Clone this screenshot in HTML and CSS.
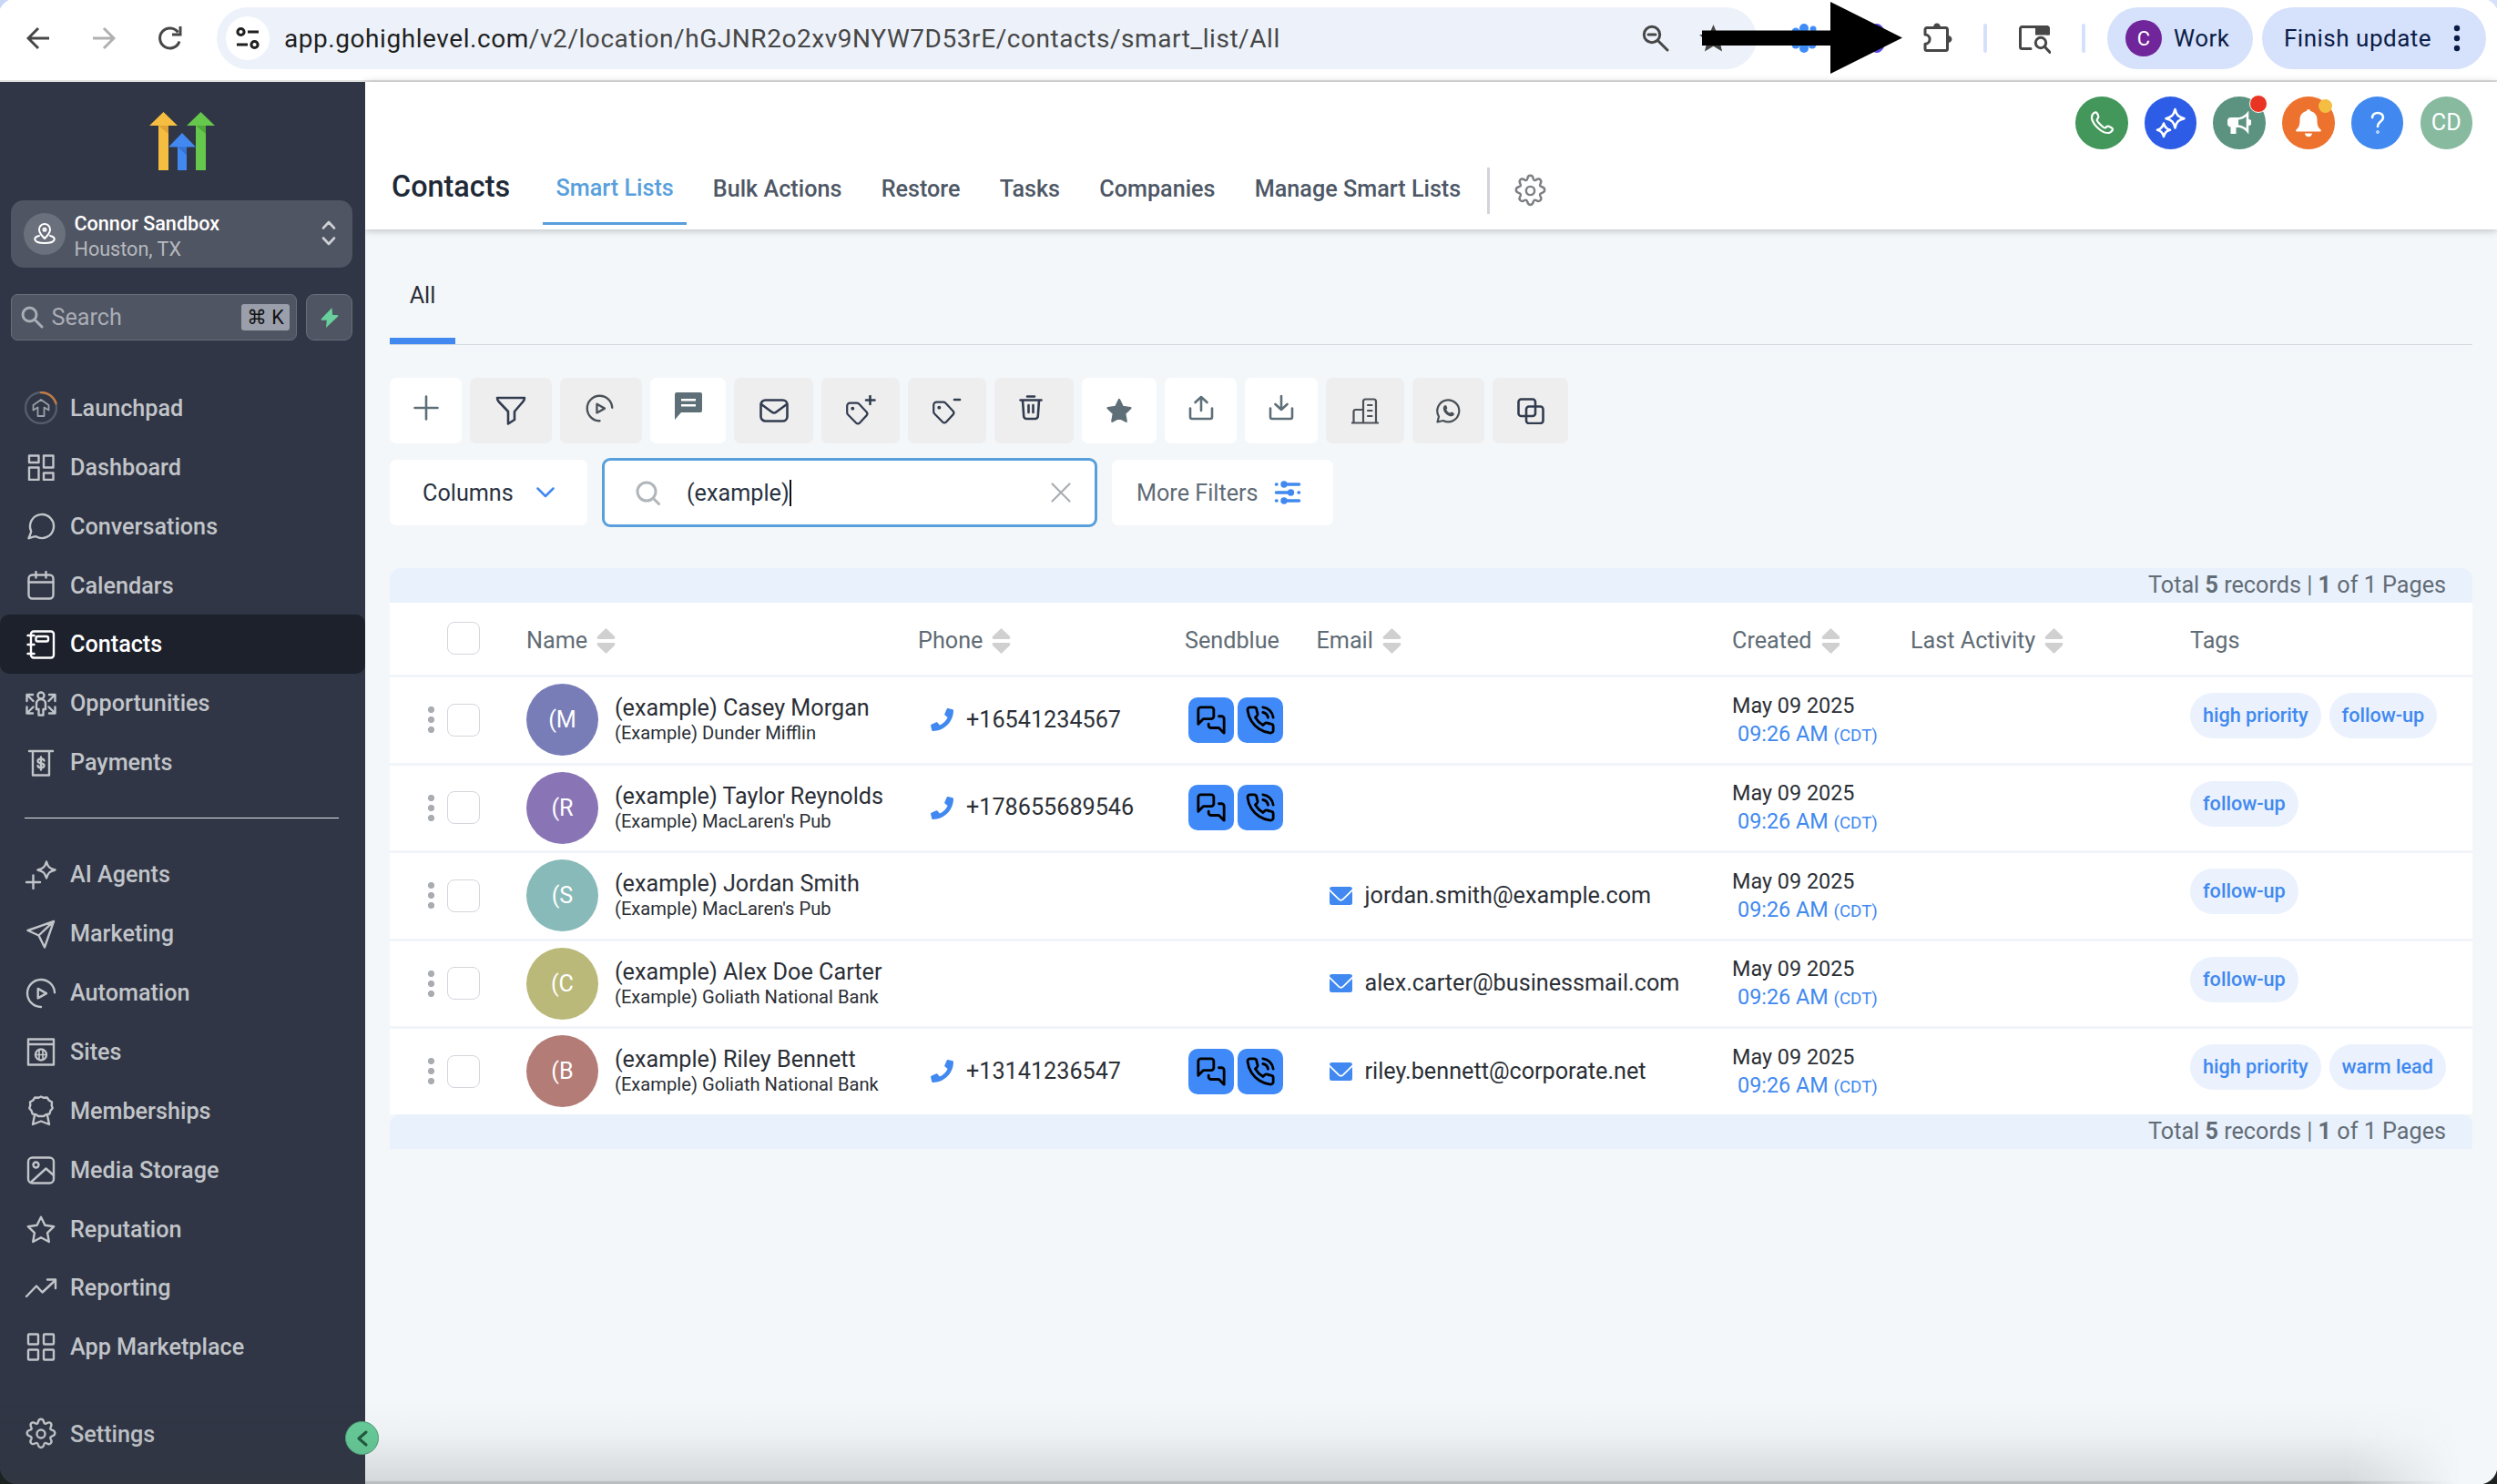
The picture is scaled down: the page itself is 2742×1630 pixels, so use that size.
FILE: index.html
```html
<!DOCTYPE html>
<html lang="en">
<head>
<meta charset="utf-8">
<title>Contacts</title>
<link rel="stylesheet" href="styles.css">
</head>
<body>
<svg class="defs" width="0" height="0" aria-hidden="true">
  <symbol id="gear" viewBox="0 0 24 24"><circle cx="12" cy="12" r="3"/><path d="M12 1.2c1.500 0 1.900 1 2.100 2.200.2 1 1 1.400 1.900.9 1.100-.7 2.100-1.200 3.100-.2s.6 2 0 3.100c-.6.900-.1 1.700.8 1.900 1.300.3 2.300.8 2.300 2.300 0 1.700-1 2-2.300 2.300-.9.300-1.400 1.100-.8 2.100.7 1.100 1.100 2 .1 3-1 1.100-2.100.7-3.100 0-.9-.5-1.700-.1-1.900.9-.3 1.200-.7 2.300-2.200 2.300s-1.900-1.100-2.200-2.300c-.2-1-1-1.400-1.900-.9-1.100.7-2.100 1.100-3.100 0-1-1-.6-2 .1-3 .5-1 .1-1.800-.8-2.100-1.300-.3-2.300-.6-2.300-2.300 0-1.500 1-2 2.300-2.300.9-.2 1.400-1 .8-1.900-.6-1.100-1-2.100 0-3.100s2-.5 3.100.2c.9.500 1.700.1 1.900-.9.200-1.200.6-2.200 2.100-2.200z"/></symbol>
  <symbol id="play" viewBox="0 0 24 24"><path d="M22 11.500A10 10 0 1 0 12 22"/><path d="M9.800 8.600v7l6.200-3.500z"/></symbol>
  <symbol id="tag" viewBox="0 0 28 28"><path d="M2 8a3 3 0 0 1 3-3h6.500a3 3 0 0 1 2.200.9l7.600 8.200a2.500 2.500 0 0 1 0 3.400l-6.800 7.300a2.500 2.500 0 0 1-3.600 0L2.900 16.700A3 3 0 0 1 2 14.600z"/><circle cx="7.500" cy="10.500" r=".8"/></symbol>
  <symbol id="sort" viewBox="0 0 20 28"><path d="M10 0l9.400 9c1 1.200.4 3-1.200 3H1.800C.2 12-.4 10.200.6 9zM10 28l9.400-9c1-1.200.4-3-1.200-3H1.800C.2 16-.4 17.800.6 19z"/></symbol>
  <symbol id="phone" viewBox="0 0 512 512"><path d="M493 24.600l-104-24c-11.300-2.600-22.900 3.300-27.500 13.900l-48 112c-4.200 9.800-1.400 21.300 6.900 28l60.600 49.600c-36 76.700-98.900 140.500-177.200 177.200l-49.600-60.600c-6.800-8.300-18.200-11.100-28-6.900l-112 48C3.900 366.500-2 378.100.6 389.400l24 104C27.100 504.200 36.700 512 48 512c256.100 0 464-207.500 464-464 0-11.200-7.700-20.900-19-23.400z"/></symbol>
  <symbol id="mail" viewBox="0 0 25 20"><path d="M2.500 0h20A2.500 2.500 0 0 1 25 2.500L14.300 13a2.600 2.600 0 0 1-3.600 0L0 2.500A2.500 2.500 0 0 1 2.500 0zM0 5l9.500 9.300a4.300 4.300 0 0 0 6 0L25 5v12.500a2.500 2.500 0 0 1-2.500 2.500h-20A2.500 2.500 0 0 1 0 17.500z"/></symbol>
  <symbol id="chats" viewBox="0 0 24 24"><path d="M14 9a2 2 0 0 1-2 2H6l-4 4V4a2 2 0 0 1 2-2h8a2 2 0 0 1 2 2z"/><path d="M18 9h2a2 2 0 0 1 2 2v11l-4-4h-6a2 2 0 0 1-2-2v-1"/></symbol>
  <symbol id="call" viewBox="0 0 24 24"><path d="M22 16.920v3a2 2 0 0 1-2.180 2 19.790 19.790 0 0 1-8.630-3.070 19.500 19.500 0 0 1-6-6 19.790 19.790 0 0 1-3.070-8.670A2 2 0 0 1 4.110 2h3a2 2 0 0 1 2 1.720c.13.960.36 1.900.7 2.810a2 2 0 0 1-.45 2.110L8.090 9.910a16 16 0 0 0 6 6l1.270-1.270a2 2 0 0 1 2.110-.45c.91.340 1.850.57 2.810.7A2 2 0 0 1 22 16.920z"/><path d="M14 2a9 9 0 0 1 8 8M14 6a5 5 0 0 1 4 4"/></symbol>
</svg>

<header class="browser">
  <div class="nav-buttons">
    <svg width="26" height="26" viewBox="0 0 26 26" class="ln dark"><path d="M25 13H2M13 2L2 13l11 11"/></svg>
    <svg width="26" height="26" viewBox="0 0 26 26" class="ln faded"><path d="M1 13h23M13 2l11 11-11 11"/></svg>
    <svg width="28" height="28" viewBox="0 0 28 28" class="ln dark"><path d="M24 17.500A11 11 0 1 1 22.500 7.500"/><path d="M25 1v9h-9" /></svg>
  </div>
  <div class="omnibox">
    <span class="site-info"><svg width="26" height="26" viewBox="0 0 26 26" class="ln site"><circle cx="5.500" cy="6" r="3.600"/><path d="M13 6h12M1 20h12"/><circle cx="20.500" cy="20" r="3.600"/></svg></span>
    <span class="url"><b>app.gohighlevel.com</b>/v2/location/hGJNR2o2xv9NYW7D53rE/contacts/smart_list/All</span>
    <svg class="ln dark zoom-ic" width="30" height="30" viewBox="0 0 30 30"><circle cx="11" cy="11" r="8.700"/><path d="M17.500 17.500L28 28M7 11h8"/></svg>
    <svg class="star" width="37" height="37" viewBox="0 0 24 24"><path d="M12 17.300l6.200 3.700-1.600-7L22 9.200l-7.200-.6L12 2 9.200 8.600 2 9.200 7.500 14l-1.700 7z"/></svg>
  </div>
  <div class="ext">
    <svg width="32" height="32" viewBox="0 0 32 32" fill="#3f8cf7"><circle cx="16" cy="16" r="10"/><circle cx="16" cy="5" r="5"/><circle cx="16" cy="27" r="5"/><circle cx="7" cy="9" r="4.500"/><circle cx="26" cy="6" r="3.500"/><circle cx="7" cy="23" r="4.500"/><circle cx="25" cy="23" r="4.500"/><circle cx="27" cy="16" r="4"/><circle cx="5" cy="16" r="4"/></svg>
    <svg width="32" height="32" viewBox="0 0 32 32"><ellipse cx="16" cy="16" rx="10" ry="16" fill="#5b4be6"/></svg>
    <svg width="34" height="34" viewBox="0 0 34 34"><path class="ln dark" d="M5 5.500h20.500a2 2 0 0 1 2 2v21a2 2 0 0 1-2 2H5a2 2 0 0 1-2-2V23.200a5 5 0 0 0 0-10.200V7.500a2 2 0 0 1 2-2z"/><path fill="#474747" d="M12 5a4 4.500 0 0 1 8 0zM28 14a4.500 4 0 0 1 0 8z"/></svg>
  </div>
  <i class="vline"></i>
  <svg class="tabsearch" width="36" height="32" viewBox="0 0 36 32"><path class="ln dark" d="M14 26.500H4.500a2 2 0 0 1-2-2v-20a2 2 0 0 1 2-2h28V10"/><path fill="#474747" d="M19 2h15a2 2 0 0 1 1 2v7.500H19z"/><circle class="ln dark" cx="25" cy="20" r="5.700"/><path class="ln dark" d="M29 24l6 6.500"/></svg>
  <i class="vline"></i>
  <div class="pill work"><span class="c-avatar">C</span>Work</div>
  <div class="pill finish">Finish update<svg width="8" height="30" viewBox="0 0 8 30" fill="#0b1d47"><circle cx="4" cy="4" r="3.200"/><circle cx="4" cy="15" r="3.200"/><circle cx="4" cy="26" r="3.200"/></svg></div>
  <svg class="pointer" width="222" height="82" viewBox="0 0 222 82"><path d="M0 33.500h141V2l79 39.500L141 81V50H0z"/></svg>
</header>

<div class="app">
  <aside class="sidebar">
    <svg class="logo" width="72" height="64" viewBox="0 0 72 64">
      <path fill="#f6be40" d="M15.500 0L31 15H21v49H10V15H0z"/><path fill="#dfa233" d="M10 15h11v9z"/>
      <path fill="#66c74d" d="M56.500 0L72 15H62v49H51V15H41z"/><path fill="#4fa83a" d="M51 15h11v9z"/>
      <path fill="#4189f0" d="M36 23l15 15.500H41V64H31V38.500H21z"/><path fill="#3472d4" d="M31 38.500h10v9z"/>
    </svg>
    <div class="location">
      <span class="loc-icon"><svg class="ln" width="24" height="24" viewBox="0 0 24 24"><path d="M12 17S6 11.500 6 7a6 6 0 0 1 12 0c0 4.500-6 10-6 10z"/><circle cx="12" cy="7.200" r="1.500"/><path d="M6 14c-3 .8-5 2-4.700 4 .4 2.500 5 4 10.700 4s10.300-1.500 10.700-4c.3-2-1.700-3.200-4.700-4"/></svg></span>
      <div class="loc-text"><strong>Connor Sandbox</strong><span>Houston, TX</span></div>
      <svg class="ln updown" width="16" height="28" viewBox="0 0 16 28"><path d="M2 8.500l6-6.500 6 6.500M2 19.500l6 6.500 6-6.500"/></svg>
    </div>
    <div class="search-row">
      <div class="search"><svg class="ln" width="25" height="25" viewBox="0 0 25 25"><circle cx="9.500" cy="9.500" r="7.500"/><path d="M15 15l8 8"/></svg><span>Search</span><kbd>⌘ K</kbd></div>
      <div class="bolt"><svg width="20" height="22" viewBox="0 0 20 22"><path fill="#69cf9c" d="M12.500 0L1 12c-.8.900-.2 1.800.8 1.800h5L6 22 19 9.800c.8-.9.200-1.800-.8-1.800h-5z"/></svg></div>
    </div>
    <nav class="menu">
      <a><svg width="36" height="36" viewBox="0 0 36 36"><circle cx="18" cy="18" r="17" stroke="#555c6a"/><path stroke="#c07c45" d="M18 1a17 17 0 0 1 16.500 12"/><path stroke="#9a9fa8" stroke-width="1.800" d="M18 9l8.500 6v5.500l-5-3V27H14.500v-9.500l-5 3V15z"/></svg>Launchpad</a>
      <a><svg width="29" height="29" viewBox="0 0 29 29"><path d="M1.500 1.500h10.500v7.500H1.500zM17.500 1.500H28v13H17.500zM1.500 14.500h10.500V28H1.500zM17.500 20.500H28V28H17.500z"/></svg>Dashboard</a>
      <a><svg width="30" height="30" viewBox="0 0 30 30"><path d="M4.200 20.500A13 13 0 1 1 9.500 26.300C7 26.200 4 27.400 1.500 28.200 2.300 25.600 4 23 4.200 20.500z"/></svg>Conversations</a>
      <a><svg width="30" height="32" viewBox="0 0 30 32"><rect x="1.500" y="4.500" width="27" height="26" rx="4"/><path d="M1.500 12.500h27M9.500 1v6.500M20.500 1v6.500"/></svg>Calendars</a>
      <a class="active"><svg width="32" height="32" viewBox="0 0 32 32"><rect x="5" y="1.500" width="25" height="29" rx="3"/><rect x="10.500" y="7" width="13.500" height="5.500" rx="2"/><path d="M1.500 6h7M1.500 16h7M1.500 26h7"/></svg>Contacts</a>
      <a><svg width="34" height="28" viewBox="0 0 34 28"><circle cx="17" cy="5" r="3.500"/><path d="M14.500 26.500V20H12v-6a5 5 0 0 1 10 0v6h-2.500v6.500zM1.500 11V4h6.500M1.500 4l7 7M1.500 17.500v7h6.500M1.500 24.500l7-7M32.500 11V4H26M32.500 4l-7 7M32.500 17.500v7H26M32.500 24.500l-7-7"/></svg>Opportunities</a>
      <a><svg width="28" height="30" viewBox="0 0 28 30"><path d="M1 2h26M5 2v26.500h18V2"/><path d="M17.500 12.500c-.5-1.600-1.800-2-3.500-2-2 0-3.500.8-3.500 2.500 0 3.500 7 1.500 7 4.800 0 1.900-1.500 2.500-3.500 2.500s-3.200-.6-3.500-2.300M14 8.500v14"/></svg>Payments</a>
      <hr>
      <a><svg width="35" height="32" viewBox="0 0 35 32"><path d="M23.500 1.500c1.500 5.500 3.500 7.500 9.500 9-6 1.500-8 3.500-9.500 9-1.500-5.500-3.500-7.500-9.500-9 6-1.500 8-3.500 9.500-9zM9 16.500v14.500M1.500 24h15"/></svg>AI Agents</a>
      <a><svg width="32" height="32" viewBox="0 0 32 32"><path d="M30 2L1.500 12l12 5.500L20 30.500zM30 2L13.500 17.500"/></svg>Marketing</a>
      <a><svg width="36" height="36" viewBox="0 0 24 24" stroke-width="1.700"><use href="#play"/></svg>Automation</a>
      <a><svg width="31" height="31" viewBox="0 0 31 31"><path d="M1.500 1.500h28v28h-28zM1.500 7h28"/><circle cx="15.500" cy="18.500" r="6"/><path d="M9.500 18.500h12M13.500 13v11M17.500 13v11" stroke-width="1.700"/></svg>Sites</a>
      <a><svg width="28" height="34" viewBox="0 0 28 34"><path d="M14 1.500l3 1.300 3.700-.3 2 3L26 7.500l-.3 3.700 1 3-2.300 2.800-1 3.500-3.700.6L17 23h-6l-2.700-1.900-3.700-.6-1-3.500-2.300-2.800 1-3L2 7.500l3.300-2 2-3 3.700.3z"/><path d="M7 22l-2 10 9-3.500 9 3.500-2-10"/></svg>Memberships</a>
      <a><svg width="31" height="31" viewBox="0 0 31 31"><rect x="1.500" y="1.500" width="28" height="28" rx="4.500"/><circle cx="10" cy="9.500" r="3"/><path d="M5 28l16-14.500 8.500 7.500"/></svg>Media Storage</a>
      <a><svg width="32" height="31" viewBox="0 0 32 31"><path d="M16 1.800l4.400 9 9.800 1.400-7.100 7 1.700 9.800-8.800-4.700L7.200 29l1.700-9.800-7.100-7 9.800-1.400z"/></svg>Reputation</a>
      <a><svg width="35" height="22" viewBox="0 0 35 22"><path d="M1.500 20l11-11.500L19 15.500 33.500 2M24.500 1.500h9v9.500"/></svg>Reporting</a>
      <a><svg width="31" height="31" viewBox="0 0 31 31"><rect x="1.500" y="1.500" width="11" height="11" rx="1"/><rect x="18.500" y="1.500" width="11" height="11" rx="1"/><rect x="1.500" y="18.500" width="11" height="11" rx="1"/><rect x="18.500" y="18.500" width="11" height="11" rx="1"/></svg>App Marketplace</a>
      <a class="settings"><svg width="36" height="36" viewBox="0 0 24 24" stroke-width="1.700"><use href="#gear"/></svg>Settings</a>
    </nav>
    <span class="collapse"><svg class="ln" width="14" height="18" viewBox="0 0 14 18"><path d="M11 2L3 9l8 7"/></svg></span>
  </aside>

  <main class="content">
    <header class="topbar">
      <div class="round-actions">
        <span class="ra green"><svg class="ln" width="28" height="28" viewBox="0 0 24 24"><path d="M3.200 4.300C4 3 5.500 1.800 6.600 2c1 .3 2.300 3.300 2.300 4.500 0 1-1.500 1.700-1.500 2.700 0 1.500 6 7.500 7.500 7.500 1 0 1.600-1.600 2.700-1.600 1.200 0 4.400 1.500 4.600 2.600.2 1.100-1 2.500-2.400 3.300C13 24-.5 10.500 3.200 4.300z"/></svg></span>
        <span class="ra blue"><svg class="ln" width="34" height="34" viewBox="0 0 34 34"><path d="M21.500 2c1.600 6.500 3.500 8.500 10 10.200-6.500 1.600-8.500 3.600-10 10.300-1.600-6.700-3.600-8.700-10-10.300 6.400-1.700 8.400-3.700 10-10.200zM9 17.500c1 4 2.700 6 7 7.300-4.300 1-6 3-7 7.200-1-4.200-2.700-6.200-7-7.200 4.300-1.300 6-3.300 7-7.300z"/></svg></span>
        <span class="ra teal"><svg width="26" height="26" viewBox="0 0 26 26" fill="#fff"><path d="M4 7h8v11H9.500v7H3.500v-7.500A4 4 0 0 1 0 14v-3a4 4 0 0 1 4-4z"/><path fill="none" stroke="#fff" stroke-width="2.600" d="M10 8.500c5 0 9-2 12-5.500v19c-3-3.500-7-5.500-12-5.500"/><path d="M23 9a3 3 0 0 1 0 7z"/></svg><i class="dot red"></i></span>
        <span class="ra orange"><svg width="28" height="32" viewBox="0 0 28 32" fill="#fff"><path d="M14 1c1.500 0 2 1 2.200 2 4.500 1 7.300 4.500 7.300 9.500 0 6 1 8.500 4 11 .8 1.200 0 2-1 2h-25c-1 0-1.800-.8-1-2 3-2.500 4-5 4-11C4.500 7.500 7.300 4 11.800 3 12 2 12.500 1 14 1zM9.800 27.500h8.400c-.6 2.400-2 3.800-4.200 3.800s-3.600-1.400-4.200-3.800z"/></svg><i class="dot yellow"></i></span>
        <span class="ra sky"><svg class="ln" width="18" height="26" viewBox="0 0 18 26"><path d="M3 7c.3-3 2.800-5 6-5 3.400 0 6 2 6 5 0 4.300-6 4.600-6 10"/><circle cx="9" cy="23" r=".5"/></svg></span>
        <span class="ra mint">CD</span>
      </div>
      <div class="tabs">
        <h1>Contacts</h1>
        <a class="on">Smart Lists</a><a>Bulk Actions</a><a>Restore</a><a>Tasks</a><a>Companies</a><a>Manage Smart Lists</a>
        <i class="sep"></i>
        <svg class="ln tgear" width="37" height="37" viewBox="0 0 24 24"><use href="#gear"/></svg>
      </div>
    </header>

    <div class="page">
      <div class="listtabs"><span>All</span></div>

      <div class="tools">
        <button class="w79"><svg class="lift" width="28" height="28" viewBox="0 0 28 28" stroke="#5f6f78"><path d="M14 1.500v25M1.500 14h25"/></svg></button>
        <button class="g w90"><svg width="34" height="32" viewBox="0 0 34 32"><path d="M2 2h30c0 2-.5 3-2 4.500L21 17v9l-7 4.500V17L4 6.500C2.500 5 2 4 2 2z"/></svg></button>
        <button class="g w90"><svg class="up" width="33" height="33" viewBox="0 0 24 24" stroke="#4d5767"><use href="#play"/></svg></button>
        <button class="w83"><svg class="up5" width="30" height="30" viewBox="0 0 30 30" stroke="none" fill="#5f6f78"><path fill-rule="evenodd" d="M2 0h26a2 2 0 0 1 2 2v18a2 2 0 0 1-2 2H7l-7 8V2a2 2 0 0 1 2-2zM7 7v2.500h16V7zM7 13v2.500h16V13z"/></svg></button>
        <button class="g w87"><svg width="32" height="26" viewBox="0 0 32 26"><rect x="1.500" y="1.500" width="29" height="23" rx="5"/><path d="M2 6l11.500 8.500a4 4 0 0 0 5 0L30 6"/></svg></button>
        <button class="g w86"><svg width="34" height="34" viewBox="0 0 34 34"><svg x="0" y="3" width="31" height="31" viewBox="0 0 28 28"><use href="#tag"/></svg><path d="M27.500 1v9M23 5.500h9.500"/></svg></button>
        <button class="g w86"><svg width="34" height="34" viewBox="0 0 34 34"><svg x="0" y="2" width="31" height="31" viewBox="0 0 28 28"><use href="#tag"/></svg><path d="M25 5h6"/></svg></button>
        <button class="g w87"><svg class="trash" width="26" height="28" viewBox="0 0 26 28"><path d="M1.500 5.500h23M9 1.500h8M4 5.500l1.200 17.500a3 3 0 0 0 3 3h9.600a3 3 0 0 0 3-3L22 5.500M10.500 11v8M15.500 11v8"/></svg></button>
        <button class="w82"><svg width="28" height="28" viewBox="0 0 32 31" fill="#5f6f78" stroke="#5f6f78"><path d="M16 1.800l4.400 9 9.800 1.400-7.100 7 1.700 9.800-8.800-4.700L7.200 29l1.700-9.800-7.100-7 9.800-1.400z"/></svg></button>
        <button class="w79"><svg class="lift" width="28" height="28" viewBox="0 0 28 28" stroke="#5f6f78"><path d="M2 14.500V24a2 2 0 0 0 2 2h20a2 2 0 0 0 2-2v-9.500M14 17V2M7.500 8L14 2l6.500 6"/></svg></button>
        <button class="w80"><svg class="lift" width="28" height="28" viewBox="0 0 28 28" stroke="#5f6f78"><path d="M2 14.500V24a2 2 0 0 0 2 2h20a2 2 0 0 0 2-2v-9.500M14 1v15M7.500 10L14 16l6.500-6"/></svg></button>
        <button class="g w86"><svg width="30" height="29" viewBox="0 0 30 29" stroke="#4a5058"><path d="M0 27.500h30M2.500 27V15a2 2 0 0 1 2-2H13M13 27V4a2.500 2.500 0 0 1 2.500-2.500h9A2.500 2.500 0 0 1 27 4v23M18 8h4.500M18 14h4.500M18 20h4.500"/></svg></button>
        <button class="g w79"><svg width="27" height="27" viewBox="0 0 27 27" stroke="#4a5058"><path d="M3 19.500A12 12 0 1 1 7.800 24L1.500 25.500z"/><path fill="#4a5058" stroke="none" d="M9 7.500c1-.9 2-.7 2.400.2l.9 2.300c.2.600-1 1.500-.9 2 .5 1.500 2.200 3 3.700 3.600.6.200 1.300-1.300 2-1l2.400 1.200c.8.600.3 2-.5 2.700-1.500 1.200-3.500.9-5.500-.1-2.500-1.400-4-3-5-5-1-2.300-1-4.500.5-5.900z"/></svg></button>
        <button class="g w83"><svg width="30" height="29" viewBox="0 0 30 29"><rect x="1.500" y="1.500" width="18.500" height="18.500" rx="3"/><rect x="10" y="9.500" width="18.500" height="18.500" rx="3"/></svg></button>
      </div>

      <div class="filters">
        <div class="box columns">Columns<svg class="ln" width="20" height="12" viewBox="0 0 20 12"><path d="M1.500 1.500L10 10l8.500-8.500"/></svg></div>
        <div class="box query"><svg class="ln" width="27" height="27" viewBox="0 0 27 27"><circle cx="12" cy="12" r="10"/><path d="M19.500 19.500l6 6"/></svg><span>(example)</span><i class="caret"></i><svg class="ln x" width="22" height="22" viewBox="0 0 22 22"><path d="M1.500 1.500l19 19M20.500 1.500l-19 19"/></svg></div>
        <div class="box more">More Filters<svg width="30" height="26" viewBox="0 0 30 26"><g stroke="#4189f0" stroke-width="3.600" stroke-linecap="round"><path d="M2.500 4H3M11 4h16.500M2.500 13h15M27 13h.5M2.500 22H3M11 22h16.500"/></g><g fill="#4189f0"><circle cx="11" cy="4" r="3.700"/><circle cx="18.500" cy="13" r="3.700"/><circle cx="11" cy="22" r="3.700"/></g></svg></div>
      </div>

      <section class="table">
        <div class="total">Total <b>5</b> records | <b>1</b> of 1 Pages</div>
        <div class="row head">
          <div class="sel"><i class="check"></i></div>
          <div>Name<svg class="sort"><use href="#sort"/></svg></div>
          <div>Phone<svg class="sort"><use href="#sort"/></svg></div>
          <div>Sendblue</div>
          <div>Email<svg class="sort"><use href="#sort"/></svg></div>
          <div>Created<svg class="sort"><use href="#sort"/></svg></div>
          <div>Last Activity<svg class="sort"><use href="#sort"/></svg></div>
          <div>Tags</div>
        </div>
        <div class="row">
          <div class="sel"><i class="dots"></i><i class="check"></i></div>
          <div class="who"><span class="av a1">(M</span><p>(example) Casey Morgan<small>(Example) Dunder Mifflin</small></p></div>
          <div class="tel"><svg><use href="#phone"/></svg>+16541234567</div>
          <div class="sb"><span><svg class="ln"><use href="#chats"/></svg></span><span><svg class="ln"><use href="#call"/></svg></span></div>
          <div></div>
          <div class="date"><p>May 09 2025<em>09:26 AM <small>(CDT)</small></em></p></div>
          <div></div>
          <div class="tags"><span>high priority</span><span>follow-up</span></div>
        </div>
        <div class="row">
          <div class="sel"><i class="dots"></i><i class="check"></i></div>
          <div class="who"><span class="av a2">(R</span><p>(example) Taylor Reynolds<small>(Example) MacLaren's Pub</small></p></div>
          <div class="tel"><svg><use href="#phone"/></svg>+178655689546</div>
          <div class="sb"><span><svg class="ln"><use href="#chats"/></svg></span><span><svg class="ln"><use href="#call"/></svg></span></div>
          <div></div>
          <div class="date"><p>May 09 2025<em>09:26 AM <small>(CDT)</small></em></p></div>
          <div></div>
          <div class="tags"><span>follow-up</span></div>
        </div>
        <div class="row">
          <div class="sel"><i class="dots"></i><i class="check"></i></div>
          <div class="who"><span class="av a3">(S</span><p>(example) Jordan Smith<small>(Example) MacLaren's Pub</small></p></div>
          <div></div>
          <div></div>
          <div class="em"><svg><use href="#mail"/></svg>jordan.smith@example.com</div>
          <div class="date"><p>May 09 2025<em>09:26 AM <small>(CDT)</small></em></p></div>
          <div></div>
          <div class="tags"><span>follow-up</span></div>
        </div>
        <div class="row">
          <div class="sel"><i class="dots"></i><i class="check"></i></div>
          <div class="who"><span class="av a4">(C</span><p>(example) Alex Doe Carter<small>(Example) Goliath National Bank</small></p></div>
          <div></div>
          <div></div>
          <div class="em"><svg><use href="#mail"/></svg>alex.carter@businessmail.com</div>
          <div class="date"><p>May 09 2025<em>09:26 AM <small>(CDT)</small></em></p></div>
          <div></div>
          <div class="tags"><span>follow-up</span></div>
        </div>
        <div class="row">
          <div class="sel"><i class="dots"></i><i class="check"></i></div>
          <div class="who"><span class="av a5">(B</span><p>(example) Riley Bennett<small>(Example) Goliath National Bank</small></p></div>
          <div class="tel"><svg><use href="#phone"/></svg>+13141236547</div>
          <div class="sb"><span><svg class="ln"><use href="#chats"/></svg></span><span><svg class="ln"><use href="#call"/></svg></span></div>
          <div class="em"><svg><use href="#mail"/></svg>riley.bennett@corporate.net</div>
          <div class="date"><p>May 09 2025<em>09:26 AM <small>(CDT)</small></em></p></div>
          <div></div>
          <div class="tags"><span>high priority</span><span>warm lead</span></div>
        </div>
        <div class="total">Total <b>5</b> records | <b>1</b> of 1 Pages</div>
      </section>
    </div>
  </main>
</div>
<div class="dock-shadow"></div>
<i class="corner tl"></i><i class="corner tr"></i><i class="corner bl"></i><i class="corner br"></i>
</body>
</html>
```
FILE: styles.css
```css
* { box-sizing: border-box; margin: 0; padding: 0; }
body { position: relative; width: 2742px; height: 1630px; overflow: hidden; font-family: Roboto, "Liberation Sans", sans-serif; font-size: 25.2px; background: #f3f7fa; color: #2b2f36; }
svg { display: block; flex: none; }
i, em { font-style: normal; }
.defs { position: absolute; }
.ln { fill: none; stroke: currentColor; stroke-width: 3; stroke-linecap: round; stroke-linejoin: round; }
.dark { color: #474747; }
.faded { color: #b0b0b0; }

/* browser chrome */
.browser { position: relative; height: 90px; border-bottom: 2px solid #dfe1e0; background: #fff; display: flex; align-items: center; padding: 0 12px 4px 29px; }
.nav-buttons { display: flex; gap: 46px; width: 209px; align-items: center; }
.nav-buttons .ln, .site { stroke-linecap: butt; stroke-linejoin: miter; }
.omnibox { width: 1691px; height: 68px; border-radius: 34px; background: #edf2fa; display: flex; align-items: center; padding: 0 29px 0 10px; }
.site-info { width: 48px; height: 48px; border-radius: 50%; background: #fff; display: flex; align-items: center; justify-content: center; color: #1f1f1f; }
.url { margin-left: 16px; flex: 1; font-size: 28px; color: #474747; white-space: nowrap; letter-spacing: .56px; }
.url b { font-weight: 400; color: #1f1f1f; }
.zoom-ic { margin-right: 30px; }
.star { fill: #474747; }
.ext { display: flex; align-items: center; margin-left: 36px; gap: 48px; width: 213px; }
.ext svg:last-child { margin-left: -14px; }
.vline { width: 4px; height: 32px; border-radius: 2px; background: #d5e1fb; }
.tabsearch { margin: 2px 34px 0 34px; }
.pill { height: 68px; border-radius: 34px; background: #d6e1fb; display: flex; align-items: center; color: #0b1d47; font-size: 26px; white-space: nowrap; letter-spacing: .5px; }
.work { width: 160px; margin-left: 24px; padding-left: 20px; gap: 13px; }
.finish { width: 246px; margin-left: 10px; padding: 0 28px 0 24px; justify-content: space-between; }
.c-avatar { width: 40px; height: 40px; border-radius: 50%; background: #70259b; color: #fff; font-size: 22px; letter-spacing: 0; display: flex; align-items: center; justify-content: center; }
.pointer { position: absolute; left: 1869px; top: 0; }

.app { display: flex; height: 1540px; }

/* sidebar */
.sidebar { position: relative; z-index: 1; width: 401px; flex: none; background: #303645; color: #c1c4c9; }
.logo { margin: 33px 0 0 164px; }
.location { margin: 33px 14px 0 12px; height: 74px; border-radius: 14px; background: #4f5562; display: flex; align-items: center; padding: 0 18px 0 14px; }
.loc-icon { width: 46px; height: 46px; border-radius: 50%; background: #6b717c; display: flex; align-items: center; justify-content: center; color: #fff; }
.loc-icon .ln { stroke-width: 2; }
.loc-text { margin-left: 9.500px; padding-top: 5px; flex: 1; font-size: 21.6px; line-height: 28px; display: flex; flex-direction: column; }
.loc-text strong { font-weight: 500; color: #fff; }
.loc-text span { color: #b6b9bf; }
.updown { color: #cdd0d4; stroke-width: 2.600; margin-top: -2px; }
.search-row { display: flex; gap: 10px; margin: 29px 14px 0 12px; }
.search { width: 314px; height: 51px; border: 1px solid #686e7a; border-radius: 7px; background: #4f5562; display: flex; align-items: center; padding: 0 7px 0 10px; color: #a9adb6; }
.search span { margin-left: 8.500px; flex: 1; font-size: 25.2px; }
.search kbd { width: 53px; height: 29px; border-radius: 3px; background: #9a9fab; color: #111; font: 21.6px Roboto, "DejaVu Sans", sans-serif; line-height: 29px; text-align: center; white-space: nowrap; }
.bolt { width: 51px; height: 51px; border: 1px solid #686e7a; border-radius: 9px; background: #4f5562; display: flex; align-items: center; justify-content: center; }
.menu { margin-top: 42px; display: flex; flex-direction: column; }
.menu a { height: 64.860px; display: flex; align-items: center; font-weight: 500; font-size: 25.2px; }
.menu a svg { width: 36px; margin: 0 14px 0 27px; fill: none; stroke: currentColor; stroke-width: 2.400; stroke-linecap: round; stroke-linejoin: round; }
.menu a svg[viewBox="0 0 24 24"] { stroke-width: 1.600; }
.menu .active { background: #1d212b; color: #fff; border-radius: 10px; }
.menu hr { border: 0; height: 1px; background: #e3e5e8; margin: 28px 29px 29.500px 27px; }
.menu .settings { margin-top: 30.500px; }
.collapse { position: absolute; left: 379px; top: 1471px; width: 37px; height: 37px; border-radius: 50%; background: #66cb98; border: 1px solid #4d9f78; color: #22583e; display: flex; align-items: center; justify-content: center; }

/* header */
.content { flex: 1; min-width: 0; }
.topbar { position: relative; height: 162px; background: #fff; box-shadow: 0 1px 8px rgba(0,0,0,.25); padding-top: 16px; }
.round-actions { display: flex; justify-content: flex-end; gap: 18.200px; padding-right: 27px; }
.ra { position: relative; width: 57.500px; height: 57.500px; border-radius: 50%; display: flex; align-items: center; justify-content: center; color: #fff; font-size: 25.2px; }
.ra .ln { stroke-width: 2.600; }
.ra.green .ln { stroke-width: 1.900; }
.green { background: #44975b; } .blue { background: #2d5de6; } .teal { background: #5c9380; }
.orange { background: #ec722e; } .sky { background: #4189f0; } .mint { background: #87ba9f; }
.dot { position: absolute; border-radius: 50%; }
.dot.red { width: 20px; height: 20px; right: -2px; top: -2px; background: #e93323; border: 1px solid #fff; }
.dot.yellow { width: 15px; height: 15px; right: 3px; top: 3px; background: #f4be42; }
.tabs { display: flex; height: 89px; padding-left: 29px; align-items: flex-start; font-weight: 500; color: #4d5765; }
.tabs h1 { font-size: 32.4px; font-weight: 500; color: #212936; width: 166px; line-height: 82px; white-space: nowrap; }
.tabs a { line-height: 88px; white-space: nowrap; margin-right: 43.200px; }
.tabs .on { color: #589fdc; line-height: 86px; height: 83.500px; padding: 0 14.500px; border-bottom: 3px solid #589fdc; margin-right: 28.500px; }
.sep { width: 3px; height: 51px; background: #d3d4da; margin: 20px 26px 0 -14px; }
.tgear { margin-top: 27px; color: #7d7f83; stroke-width: 1.600; }

/* page */
.page { padding: 0 27px; }
.listtabs { margin-top: 30px; height: 97px; border-bottom: 1px solid #d3d9de; display: flex; }
.listtabs span { width: 72px; border-bottom: 7px solid #4189f0; text-align: center; line-height: 86px; color: #2b2f36; }
.tools { display: flex; gap: 9px; margin-top: 36px; }
.tools button { height: 72px; border: 0; border-radius: 7px; background: #fff; display: flex; align-items: center; justify-content: center; }
.tools .g { background: #eee; }
.tools svg { fill: none; stroke: #323c50; stroke-width: 2.600; stroke-linecap: round; stroke-linejoin: round; }
.tools svg[fill] { fill: #5f6f78; }
.tools svg[stroke="#5f6f78"] { stroke: #5f6f78; }
.tools svg[stroke="none"] { stroke: none; }
.tools svg[stroke="#4a5058"], .tools svg[stroke="#4d5767"] { stroke: #4a5058; stroke-width: 2.200; }
.tools svg svg { stroke-width: 2; }
.tools .up[stroke] { margin: -5px 4px 0 0; stroke-width: 1.700; }
.tools .up5 { margin-top: -10px; }
.tools .lift { margin-top: -6px; }
.tools .trash { margin: -6px 7px 0 0; }
.w79 { width: 79px; } .w80 { width: 80px; } .w82 { width: 82px; } .w83 { width: 83px; } .w86 { width: 86px; } .w87 { width: 87px; } .w90 { width: 90px; }
.filters { display: flex; align-items: center; gap: 16px; margin-top: 16px; }
.box { height: 72px; border-radius: 7px; background: #fff; display: flex; align-items: center; white-space: nowrap; color: #2a3342; }
.columns { width: 217px; padding-left: 36px; gap: 25px; }
.columns svg { color: #4189f0; stroke-width: 2.500; }
.query { width: 544px; height: 76px; border: 3px solid #589fdc; border-radius: 9px; padding: 0 26px 0 34px; }
.query svg { color: #b1b6bb; }
.query span { margin-left: 29px; }
.query .caret { width: 2px; height: 29px; background: #111; }
.query .x { margin-left: auto; color: #a9aeb3; stroke-width: 2.200; }
.more { width: 243px; padding-left: 27px; gap: 17px; color: #5f6c75; }

/* table */
.table { margin-top: 45px; width: 2287px; }
.total { height: 38px; background: #e9f1fd; border-radius: 12px 12px 0 0; text-align: right; padding-right: 29px; line-height: 38px; color: #626c75; }
.total b { font-weight: 700; }
.row { display: grid; grid-template-columns: 150px 430px 293px 144.500px 456.500px 196px 307px 1fr; height: 96.500px; background: #fff; border-top: 3px solid #f1f5f9; align-items: center; }
.row > div { display: flex; align-items: center; white-space: nowrap; }
.row.head { height: 79px; border-top: 0; color: #5f6c75; padding-top: 3px; }
.head .sel { margin-top: -4px; }
.sort { width: 21px; height: 28px; fill: #d0d0d0; margin: 2px 0 0 10px; }
.sel { justify-content: flex-end; padding-right: 51px; gap: 14px; }
.check { width: 36px; height: 36px; border: 1.500px solid #d4d6dc; border-radius: 8px; }
.dots { width: 7px; height: 29px; background: radial-gradient(circle at 3.500px 3.500px, #a9adb1 3.300px, transparent 3.900px) 0 0 / 7px 11px; }
.av { width: 79px; height: 79px; border-radius: 50%; display: flex; align-items: center; justify-content: center; color: #fff; font-size: 25.2px; margin-right: 18px; }
.a1 { background: #787db8; } .a2 { background: #8975b5; } .a3 { background: #88bab9; } .a4 { background: #bab97a; } .a5 { background: #b37c76; }
.who p { line-height: 29px; font-size: 25.2px; }
.who small { display: block; font-size: 20.16px; line-height: 26px; }
.tel svg { width: 25px; height: 25px; fill: #4189f0; margin: 1px 14px 0 14px; }
.tel, .em { padding-bottom: 1px; }
.em svg { width: 25px; height: 20px; fill: #4189f0; margin: 1px 14px 0 14px; }
.sb { gap: 4px; padding-left: 4px; }
.sb span { width: 50px; height: 50px; border-radius: 10px; background: #3f8af8; display: flex; align-items: center; justify-content: center; color: #000; }
.sb svg { width: 34px; height: 34px; stroke-width: 2; }
.date p { line-height: 31px; font-size: 23.4px; padding-top: 2px; }
.date em { display: block; color: #4189f0; padding-left: 6px; }
.date small { font-size: 18.72px; }
.tags { gap: 9px; margin-top: -9px; }
.tags span { height: 50px; border-radius: 25px; background: #ebf2fd; color: #4189f0; font-weight: 500; font-size: 21.6px; padding: 0 14px; line-height: 50px; }

/* screen edges */
.dock-shadow { position: absolute; left: 0; bottom: 0; width: 2742px; height: 90px; background: linear-gradient(to bottom, rgba(60,60,60,0), rgba(60,60,60,.03) 40%, rgba(60,60,60,.16) 96%, rgba(60,60,60,.3) 97%); -webkit-mask-image: linear-gradient(to right, #000 94%, transparent 98.500%); mask-image: linear-gradient(to right, #000 94%, transparent 98.500%); z-index: 2; }
.corner { position: absolute; width: 20px; height: 20px; z-index: 3; }
.tl { left: 0; top: 0; background: radial-gradient(circle at 100% 100%, transparent 22px, #c9d7f7 23px); }
.tr { right: 0; top: 0; background: radial-gradient(circle at 0 100%, transparent 22px, #d6e1fb 23px); }
.bl { left: 0; bottom: 0; background: radial-gradient(circle at 100% 0, transparent 20px, #1c221f 21px); }
.br { right: 0; bottom: 0; background: radial-gradient(circle at 0 0, transparent 20px, #1c221f 21px); }
```
